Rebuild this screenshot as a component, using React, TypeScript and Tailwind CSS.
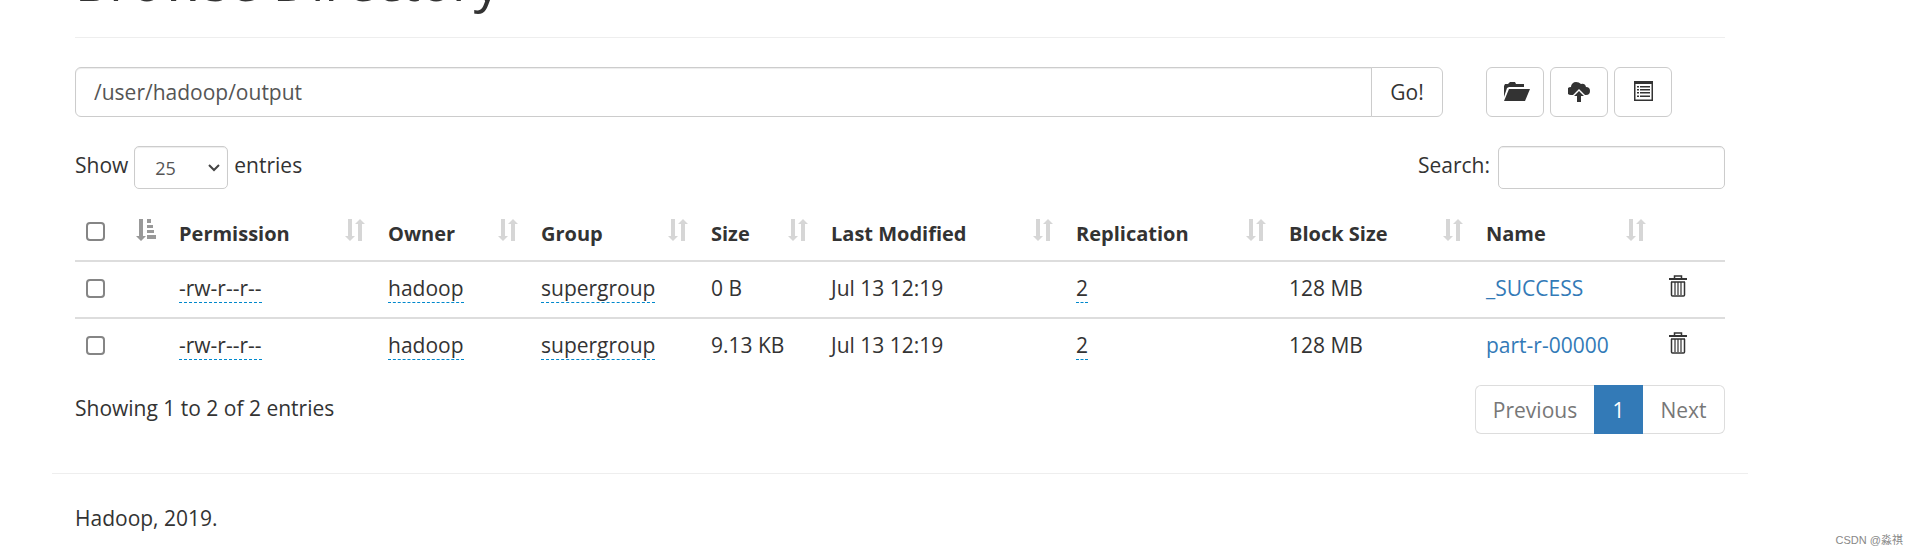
import { useState } from "react";

interface FileEntry {
  permission: string;
  owner: string;
  group: string;
  size: string;
  modified: string;
  replication: number;
  blockSize: string;
  name: string;
}

const files: FileEntry[] = [
  {
    permission: "-rw-r--r--",
    owner: "hadoop",
    group: "supergroup",
    size: "0 B",
    modified: "Jul 13 12:19",
    replication: 2,
    blockSize: "128 MB",
    name: "_SUCCESS"
  },
  {
    permission: "-rw-r--r--",
    owner: "hadoop",
    group: "supergroup",
    size: "9.13 KB",
    modified: "Jul 13 12:19",
    replication: 2,
    blockSize: "128 MB",
    name: "part-r-00000"
  }
];

const columns = [
  { label: "Permission", width: "w-[209px]" },
  { label: "Owner", width: "w-[153px]" },
  { label: "Group", width: "w-[170px]" },
  { label: "Size", width: "w-[120px]" },
  { label: "Last Modified", width: "w-[245px]" },
  { label: "Replication", width: "w-[213px]" },
  { label: "Block Size", width: "w-[197px]" },
  { label: "Name", width: "w-[183px]" }
];

const SortIcon = () => (
  <svg width="20" height="22" viewBox="0 0 20 22" className="text-[#d6d6d6]" fill="currentColor">
    <path d="M3 0h4v17h3l-5 5-5-5h3zM13 22V5h-3l5-5 5 5h-3v17z" />
  </svg>
);

const SortActiveIcon = () => (
  <svg width="20" height="22" viewBox="0 0 20 22" className="text-[#999]" fill="currentColor">
    <path d="M3 0h4v17h3l-5 5-5-5h3z" />
    <path d="M11 0h4v4h-4zM11 6h6v3h-6zM11 11h7v3h-7zM11 16h9v4h-9z" />
  </svg>
);

const FolderIcon = () => (
  <svg width="30" height="20" viewBox="-4 0 30 20" fill="currentColor">
    <path d="M0 15V4l1-2h3l2-2h5l1 2h8v3H5L3 6z" />
    <path d="M5 7h21l-5 12H0z" />
  </svg>
);

const UploadIcon = () => (
  <svg width="22" height="22" viewBox="0 0 22 22" fill="currentColor">
    <path d="M3 14a4 4 0 0 1 0-8A5 5 0 0 1 8 1q3 0 5 2 4-1 5 3a4 4 0 0 1 0 8h-1l-6-6-6 6z" />
    <path d="M11 10l5 5h-3v6H9v-6H6z" />
  </svg>
);

const ListIcon = () => (
  <svg width="20" height="22" viewBox="0 0 20 22" fill="currentColor">
    <path fillRule="evenodd" d="M1 0h19v20H1zM2.500 3v15.500h16V3z" />
    <path d="M4 5h2v1.400H4zM4 8h2v1.400H4zM4 11h2v1.400H4zM4 14.500h2V16H4zM7 5h10v1.400H7zM7 8h10v1.400H7zM7 11h10v1.400H7zM7 14.500h10V16H7z" />
  </svg>
);

const TrashIcon = () => (
  <svg width="18" height="22" viewBox="0 0 18 22" fill="none" stroke="currentColor">
    <path d="M0 4h18" strokeWidth="2" />
    <path d="M5.500 3V1h7v2" strokeWidth="1.500" />
    <path d="M2 7h14M2.500 7v13q0 1 1 1h11q1 0 1-1V7" strokeWidth="1.500" />
    <path d="M6 7v13M9 7v13M12 7v13" strokeWidth="1.200" />
  </svg>
);

const iconButton =
  "flex h-[50px] w-[58px] items-center justify-center rounded-md border border-[#ccc] bg-white";
const field = "border border-[#ccc] bg-white text-[#555] shadow-[inset_0_1px_1px_rgba(0,0,0,0.075)]";
const editable = "border-b border-dashed border-[#0088cc]";
const checkbox =
  "block size-[19px] appearance-none rounded-[4px] border-2 border-[#858585] bg-white checked:bg-[#337ab7]";

const App = () => {
  const [path, setPath] = useState("/user/hadoop/output");

  return (
    <div className="relative min-h-screen bg-white font-['Open_Sans','Noto_Sans_CJK_SC',sans-serif] text-[21px] leading-[30px] text-[#333]">
      <main className="ml-[52px] mr-[170px]">
        <div className="px-[23px]">
          {/* scrolled so that only the foot of the heading shows */}
          <header className="flex h-[38px] items-start overflow-hidden border-b border-[#eee]">
            <h1 className="-mt-[49px] text-[53px] leading-[60px]">Browse Directory</h1>
          </header>

          <div className="mt-[29px] flex">
            <form className="flex flex-1" onSubmit={(e) => e.preventDefault()}>
              <input
                type="text"
                aria-label="Directory"
                value={path}
                onChange={(e) => setPath(e.target.value)}
                className={`${field} h-[50px] min-w-0 flex-1 rounded-l-md px-[18px]`}
              />
              <button className="-ml-px h-[50px] w-[72px] rounded-r-md border border-[#ccc] bg-white">
                Go!
              </button>
            </form>
            <div className="ml-[43px] mr-[53px] flex gap-[6px]">
              <button aria-label="Create directory" className={iconButton}>
                <FolderIcon />
              </button>
              <button aria-label="Upload files" className={iconButton}>
                <UploadIcon />
              </button>
              <button aria-label="Cut and paste" className={iconButton}>
                <ListIcon />
              </button>
            </div>
          </div>

          <div className="mt-[29px] flex justify-between">
            <div className="flex gap-[6px]">
              <label htmlFor="length" className="mt-1">
                Show
              </label>
              <div className="relative">
                <select
                  id="length"
                  defaultValue="25"
                  className={`${field} h-[43px] w-[94px] appearance-none rounded-[5px] pl-5 text-[18px]`}
                >
                  <option>25</option>
                  <option>50</option>
                  <option>100</option>
                </select>
                <svg
                  width="12"
                  height="8"
                  viewBox="0 0 12 8"
                  fill="none"
                  stroke="#444"
                  strokeWidth="2"
                  className="pointer-events-none absolute right-2 top-[18px]"
                >
                  <path d="M1 1l5 5 5-5" />
                </svg>
              </div>
              <span className="mt-1">entries</span>
            </div>
            <div className="flex gap-2">
              <label htmlFor="search" className="mt-1">
                Search:
              </label>
              <input
                id="search"
                type="search"
                className={`${field} h-[43px] w-[227px] rounded-[5px] px-4 text-[18px]`}
              />
            </div>
          </div>

          <table className="mt-[9px] w-full table-fixed border-collapse text-left">
            <thead>
              <tr className="h-[63px] border-b-2 border-[#ddd] align-bottom text-[20px]">
                <th className="w-[92px] px-[11px] pb-[11px]">
                  <div className="flex h-[30px] items-start justify-between">
                    <input
                      type="checkbox"
                      aria-label="Select all"
                      className={`${checkbox} mt-[3px]`}
                    />
                    <SortActiveIcon />
                  </div>
                </th>
                {columns.map(({ label, width }) => (
                  <th
                    key={label}
                    className={`${width} pr-[11px] pb-[11px] pl-3 font-bold whitespace-nowrap`}
                  >
                    <div className="flex items-start justify-between">
                      {label}
                      <SortIcon />
                    </div>
                  </th>
                ))}
                <th className="w-[68px]" />
              </tr>
            </thead>
            <tbody>
              {files.map((file) => (
                <tr
                  key={file.name}
                  className="h-[57px] border-b-2 border-[#ddd] align-top last:border-b-0 [&>td]:px-3 [&>td]:pt-[11px] [&>td]:whitespace-nowrap [&>td:first-child]:px-[11px]"
                >
                  <td>
                    <input
                      type="checkbox"
                      aria-label={file.name}
                      className={`${checkbox} mt-[6px]`}
                    />
                  </td>
                  <td>
                    <span className={editable}>{file.permission}</span>
                  </td>
                  <td>
                    <span className={editable}>{file.owner}</span>
                  </td>
                  <td>
                    <span className={editable}>{file.group}</span>
                  </td>
                  <td>{file.size}</td>
                  <td>{file.modified}</td>
                  <td>
                    <span className={editable}>{file.replication}</span>
                  </td>
                  <td>{file.blockSize}</td>
                  <td>
                    <a href="#" className="text-[#337ab7]">
                      {file.name}
                    </a>
                  </td>
                  <td>
                    <button aria-label={`Delete ${file.name}`} className="mt-[2px] block">
                      <TrashIcon />
                    </button>
                  </td>
                </tr>
              ))}
            </tbody>
          </table>

          <div className="mt-[10px] flex justify-between">
            <p className="mt-2">Showing 1 to 2 of 2 entries</p>
            <nav className="flex h-[49px] text-[#777]">
              <button className="w-[119px] rounded-l-md border border-r-0 border-[#ddd]">
                Previous
              </button>
              <button className="w-[49px] bg-[#337ab7] text-white">1</button>
              <button className="w-[82px] rounded-r-md border border-l-0 border-[#ddd]">
                Next
              </button>
            </nav>
          </div>
        </div>

        <footer className="mt-[39px] border-t border-[#eee] px-[23px] pt-[29px]">
          Hadoop, 2019.
        </footer>
      </main>

      <span className="absolute right-[15px] bottom-[7px] font-['Liberation_Sans','Noto_Sans_CJK_SC',sans-serif] text-[11px] leading-[16px] text-[#888]">
        CSDN @淼祺
      </span>
    </div>
  );
};

export default App;
